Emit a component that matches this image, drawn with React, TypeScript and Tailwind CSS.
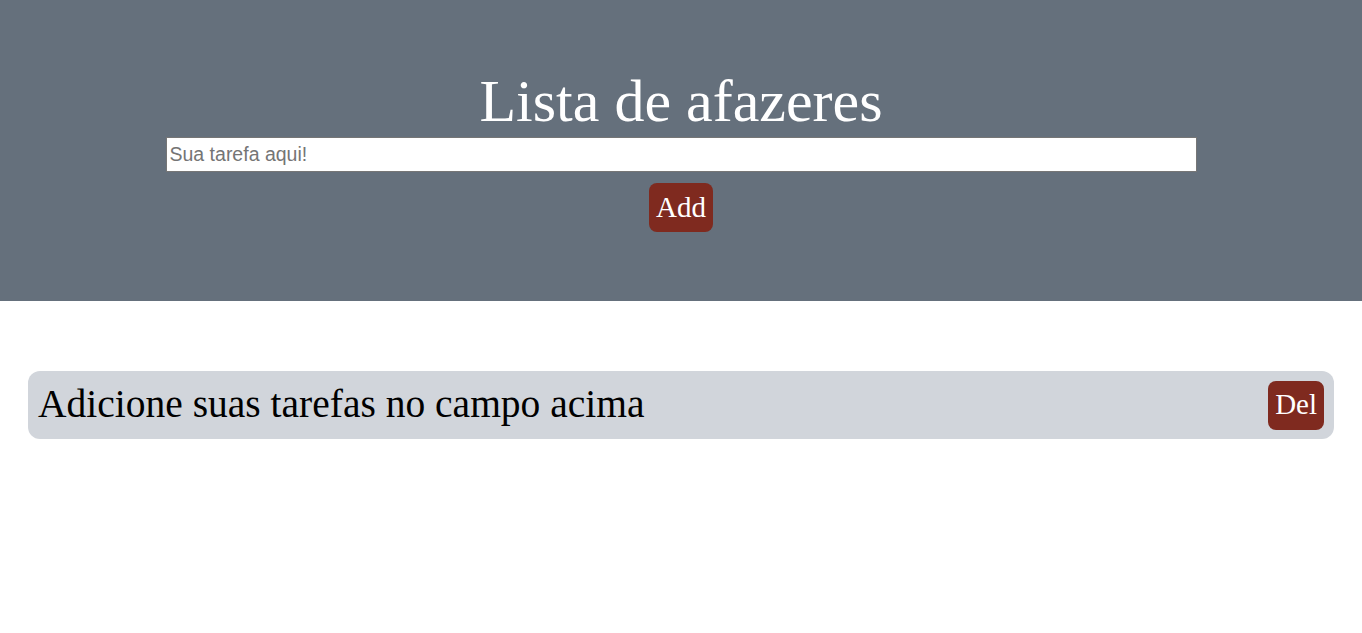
export default function App() {
  return (
    <div className="min-h-screen bg-white" style={{ fontFamily: '"Liberation Serif", serif' }}>
      {/* Header */}
      <header className="h-[301px] bg-[#65707c] flex flex-col items-center pt-[66px]">
        <h1 className="text-[60px] leading-[70px] text-white">Lista de afazeres</h1>
        <input
          type="text"
          placeholder="Sua tarefa aqui!"
          className="mt-[1px] w-[1031px] h-[35px] bg-white px-[3px] text-[19.5px] text-black placeholder:text-[#757575] border border-[#767676] outline-none"
          style={{ fontFamily: '"Liberation Sans", Arial, sans-serif' }}
        />
        <button className="mt-[11px] h-[49px] px-[7px] rounded-[8px] bg-[#7f2a1f] text-white text-[29px]">
          Add
        </button>
      </header>

      {/* List */}
      <ul className="px-[28px] pt-[70px]">
        <li className="h-[68px] rounded-[12px] bg-[#d1d5db] flex items-center justify-between pl-[10px] pr-[10px]">
          <span className="text-[39.5px] text-black">Adicione suas tarefas no campo acima</span>
          <button className="h-[49px] px-[7px] rounded-[8px] bg-[#7f2a1f] text-white text-[29px]">Del</button>
        </li>
      </ul>
    </div>
  )
}
